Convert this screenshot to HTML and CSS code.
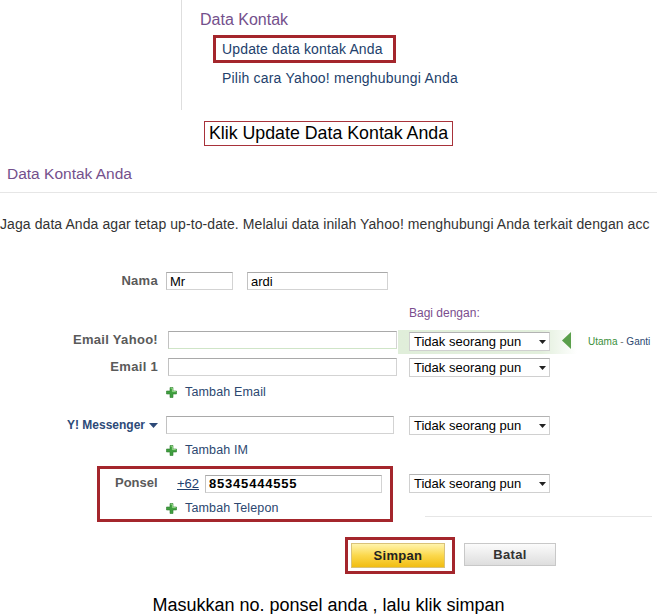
FILE: index.html
```html
<!DOCTYPE html>
<html lang="id">
<head>
<meta charset="utf-8">
<title>Data Kontak Anda</title>
<link rel="stylesheet" href="styles.css">
</head>
<body>
<div class="page">
  <div class="nav-block">
    <div class="nav-title">Data Kontak</div>
    <div class="nav-hl"><a class="nav-link">Update data kontak Anda</a></div>
    <div class="nav-item"><a class="nav-link">Pilih cara Yahoo! menghubungi Anda</a></div>
  </div>

  <div class="caption-top"><span class="caption-box">Klik Update Data Kontak Anda</span></div>

  <h2 class="sec-title">Data Kontak Anda</h2>
  <p class="intro">Jaga data Anda agar tetap up-to-date. Melalui data inilah Yahoo! menghubungi Anda terkait dengan acc</p>

  <div class="form">
    <div class="row row-nama">
      <div class="lab">Nama</div>
      <div class="field"><input class="inp w-first" value="Mr"><input class="inp w-last" value="ardi"></div>
    </div>

    <div class="row row-bagi">
      <div class="lab"></div>
      <div class="field"></div>
      <div class="bagi">Bagi dengan:</div>
    </div>

    <div class="row row-yahoo">
      <div class="lab lab-yahoo">Email Yahoo!</div>
      <div class="field"><input class="inp w-email inp-yahoo" value=""></div>
      <div class="hl">
        <div class="sel"><span>Tidak seorang pun</span><svg class="caret" width="7" height="4" viewBox="0 0 7 4"><path d="M0 0h7L3.5 4z" fill="#222"/></svg></div>
        <svg class="tri" width="9" height="17" viewBox="0 0 9 17"><path d="M9 0V17L0 8.5z" fill="#5a9f4b"/></svg>
      </div>
      <div class="primary"><span class="utama">Utama</span> <span class="dash">-</span> <span class="ganti">Ganti</span></div>
    </div>

    <div class="row row-email1">
      <div class="lab">Email 1</div>
      <div class="field"><input class="inp w-email" value=""></div>
      <div class="sel"><span>Tidak seorang pun</span><svg class="caret" width="7" height="4" viewBox="0 0 7 4"><path d="M0 0h7L3.5 4z" fill="#222"/></svg></div>
    </div>

    <div class="add add-email">
      <svg class="plus" width="11" height="11" viewBox="0 0 11 11"><path d="M4 0.5h3v3.5h3.5v3H7v3.5H4V7H0.5V4H4z" fill="#3f9f3f" stroke="#2f7d2f" stroke-width="0.6"/><path d="M4.6 1.2h1.8v3.4H9.8" fill="none" stroke="#9ee08e" stroke-width="0.9"/></svg>
      <span>Tambah Email</span>
    </div>

    <div class="row row-im">
      <div class="lab lab-im">Y! Messenger <svg class="im-caret" width="9" height="5" viewBox="0 0 9 5"><path d="M0 0h9L4.5 5z" fill="#2d4a78"/></svg></div>
      <div class="field"><input class="inp w-im" value=""></div>
      <div class="sel"><span>Tidak seorang pun</span><svg class="caret" width="7" height="4" viewBox="0 0 7 4"><path d="M0 0h7L3.5 4z" fill="#222"/></svg></div>
    </div>

    <div class="add add-im">
      <svg class="plus" width="11" height="11" viewBox="0 0 11 11"><path d="M4 0.5h3v3.5h3.5v3H7v3.5H4V7H0.5V4H4z" fill="#3f9f3f" stroke="#2f7d2f" stroke-width="0.6"/><path d="M4.6 1.2h1.8v3.4H9.8" fill="none" stroke="#9ee08e" stroke-width="0.9"/></svg>
      <span>Tambah IM</span>
    </div>

    <div class="ponsel-row">
      <div class="boxed">
        <div class="line">
          <span class="p-lab">Ponsel</span>
          <a class="cc">+62</a>
          <input class="inp phone" value="85345444555">
        </div>
        <div class="add add-tel">
          <svg class="plus" width="11" height="11" viewBox="0 0 11 11"><path d="M4 0.5h3v3.5h3.5v3H7v3.5H4V7H0.5V4H4z" fill="#3f9f3f" stroke="#2f7d2f" stroke-width="0.6"/><path d="M4.6 1.2h1.8v3.4H9.8" fill="none" stroke="#9ee08e" stroke-width="0.9"/></svg>
          <span>Tambah Telepon</span>
        </div>
      </div>
      <div class="share-col">
        <div class="sel"><span>Tidak seorang pun</span><svg class="caret" width="7" height="4" viewBox="0 0 7 4"><path d="M0 0h7L3.5 4z" fill="#222"/></svg></div>
        <div class="rule"></div>
      </div>
    </div>

    <div class="actions">
      <div class="act-box"><button class="btn btn-save">Simpan</button></div>
      <button class="btn btn-cancel">Batal</button>
    </div>
  </div>

  <p class="caption-bottom">Masukkan no. ponsel anda , lalu klik simpan</p>
</div>
</body>
</html>
```

FILE: styles.css
```css
* { box-sizing: border-box; }

body {
  margin: 0;
  background: #fff;
  font-family: "Liberation Sans", Arial, sans-serif;
  color: #333;
}

.page {
  width: 657px;
  height: 614px;
  overflow: hidden;
}

/* top navigation fragment */
.nav-block {
  margin-left: 181px;
  border-left: 1px solid #dedede;
  padding-left: 18px;
  padding-top: 11px;
  height: 110px;
}
.nav-title {
  font-size: 16px;
  line-height: 18px;
  color: #74508c;
}
.nav-hl {
  width: max-content;
  margin-top: 6px;
  margin-left: 13px;
  border: 3px solid #a4262c;
  padding: 0 10px 0 6px;
  font-size: 14px;
  line-height: 22px;
  letter-spacing: 0.15px;
}
.nav-item {
  margin-top: 5px;
  padding-left: 22px;
  font-size: 14px;
  line-height: 20px;
  letter-spacing: 0.2px;
}
.nav-link {
  color: #233f6c;
  text-decoration: none;
}

.caption-top {
  display: flex;
  justify-content: center;
  margin-top: 11px;
}
.caption-box {
  border: 1px solid #a8323a;
  padding: 0 4px;
  font-size: 17.8px;
  line-height: 23px;
  color: #000;
}

.sec-title {
  margin: 18px 0 0;
  padding: 0 0 8px 7px;
  font-size: 15.5px;
  line-height: 20px;
  font-weight: normal;
  color: #74508c;
  border-bottom: 1px solid #e6e6e6;
}

.intro {
  margin: 23px 0 0;
  font-size: 14px;
  line-height: 16px;
  letter-spacing: 0.08px;
  white-space: nowrap;
  color: #333;
}

/* form */
.form {
  margin-top: 40px;
}
.row {
  display: flex;
  align-items: flex-start;
}
.lab {
  width: 158px;
  text-align: right;
  font-size: 13px;
  font-weight: bold;
  line-height: 18px;
  letter-spacing: 0.3px;
  color: #5a5a5a;
}
.field {
  width: 251px;
  padding-left: 8px;
  display: flex;
}
.inp {
  height: 18px;
  border: 1px solid #d3d3d3;
  border-top-color: #a9a9a9;
  border-left-color: #c2c2c2;
  font: 13px "Liberation Sans", Arial, sans-serif;
  padding: 0 3px;
  color: #000;
  background: #fff;
  outline: none;
  margin: 0;
}
.w-first { width: 67px; }
.w-last { width: 141px; margin-left: 14px; }
.w-email { width: 229px; margin-left: 2px; }
.w-im { width: 228px; }

.row-bagi { margin-top: 16px; }
.bagi {
  font-size: 12px;
  line-height: 14px;
  color: #7a4d8e;
}

.sel {
  width: 141px;
  height: 19px;
  border: 1px solid #d0d0d0;
  border-top-color: #b3b3b3;
  display: flex;
  align-items: center;
  justify-content: space-between;
  padding: 0 3px 0 4px;
  font-size: 13px;
  color: #000;
  background: #fff;
}
.caret { display: block; }

.row-yahoo {
  margin-top: 10px;
  height: 24px;
}
.lab-yahoo { padding-top: 1px; }
.inp-yahoo {
  margin-top: 1px;
  border-bottom-color: #cfe5c7;
}
.hl {
  display: flex;
  align-items: flex-start;
  margin-left: -11px;
  padding: 2px 6px 3px 11px;
  height: 24px;
  background: linear-gradient(to right, #e0eeda 0, #e2efdc 80%, rgba(226, 239, 220, 0) 100%);
}
.tri {
  display: block;
  margin: 0 0 0 12px;
}
.primary {
  margin-left: 11px;
  font-size: 10px;
  line-height: 24px;
  color: #777;
}
.utama { color: #3b8f3b; }
.ganti { color: #2c4770; }

.row-email1 { margin-top: 4px; }

.add {
  display: flex;
  align-items: center;
  gap: 8px;
  margin-left: 166px;
  font-size: 12.5px;
  line-height: 14px;
  letter-spacing: 0.15px;
  color: #2c4770;
}
.plus { display: block; flex: none; }
.add-email { margin-top: 8px; }

.row-im { margin-top: 17px; }
.lab-im {
  color: #2d4a78;
  font-size: 12px;
  letter-spacing: 0;
  display: flex;
  align-items: center;
  justify-content: flex-end;
  gap: 4px;
}
.im-caret { display: block; }

.add-im { margin-top: 8px; }

/* ponsel block */
.ponsel-row {
  display: flex;
  margin-top: 9px;
}
.boxed {
  margin-left: 97px;
  width: 296px;
  border: 3px solid #a4262c;
  padding: 5px 0 4px 15px;
}
.line {
  display: flex;
  align-items: center;
  height: 19px;
}
.p-lab {
  width: 62px;
  font-size: 13px;
  font-weight: bold;
  color: #5a5a5a;
  margin-top: -2px;
}
.cc {
  width: 28px;
  font-size: 13px;
  color: #22406e;
  text-decoration: underline;
}
.phone {
  width: 177px;
  font-weight: bold;
  letter-spacing: 0.8px;
}
.boxed .add-tel {
  margin-left: 51px;
  margin-top: 8px;
}
.share-col {
  margin-left: 16px;
  padding-top: 8px;
}
.rule {
  margin: 23px 0 0 16px;
  width: 227px;
  border-top: 1px solid #e6e6e6;
}

/* buttons */
.actions {
  display: flex;
  align-items: flex-start;
  margin: 15px 0 0 345px;
}
.act-box {
  border: 3px solid #a4262c;
  padding: 3px 7px 3px 3px;
}
.btn {
  display: flex;
  align-items: center;
  justify-content: center;
  width: 94px;
  height: 25px;
  padding: 0;
  border: 1px solid #c8c8c8;
  font: bold 13px "Liberation Sans", Arial, sans-serif;
  letter-spacing: 0.3px;
}
.btn-save {
  background: linear-gradient(#fff4ad, #fbd84c 50%, #f1bd12);
  border-color: #d9c27a;
  color: #222;
}
.btn-cancel {
  margin-left: 9px;
  margin-top: 6px;
  width: 92px;
  height: 23px;
  background: linear-gradient(#fbfbfb, #dedede);
  color: #333;
}

.caption-bottom {
  margin: 20px 0 0;
  text-align: center;
  font-size: 18px;
  line-height: 22px;
  color: #000;
}
```
